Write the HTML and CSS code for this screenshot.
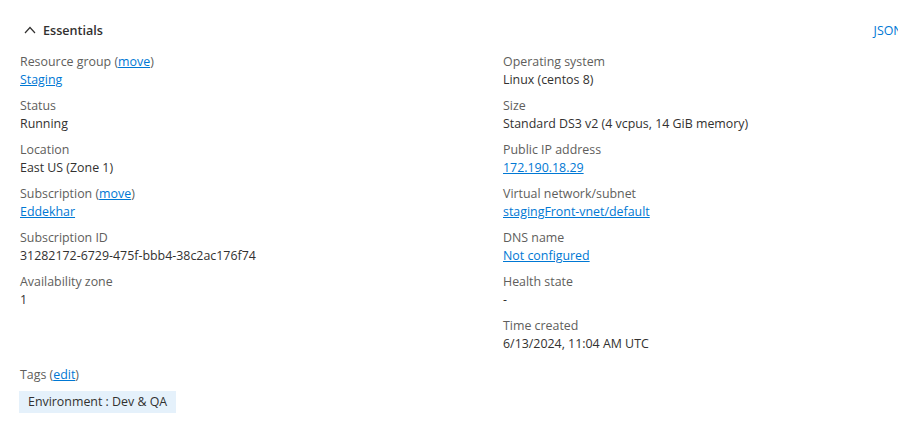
FILE: index.html
```html
<!DOCTYPE html>
<html>
<head>
<meta charset="utf-8">
<link rel="stylesheet" href="styles.css">
</head>
<body>
<div class="page">
  <div class="header">
    <button class="toggle">
      <svg class="chev" width="12" height="8" viewBox="0 0 12 8"><path d="M1 7 L6 1.5 L11 7" fill="none" stroke="#323130" stroke-width="1.2"/></svg>
      <span class="title">Essentials</span>
    </button>
    <a class="link json" href="#">JSON View</a>
  </div>
  <div class="grid">
    <div class="col">
      <div class="item"><div class="label">Resource group (<a class="link" href="#">move</a>)</div><div class="value"><a class="link" href="#">Staging</a></div></div>
      <div class="item"><div class="label">Status</div><div class="value">Running</div></div>
      <div class="item"><div class="label">Location</div><div class="value">East US (Zone 1)</div></div>
      <div class="item"><div class="label">Subscription (<a class="link" href="#">move</a>)</div><div class="value"><a class="link" href="#">Eddekhar</a></div></div>
      <div class="item"><div class="label">Subscription ID</div><div class="value">31282172-6729-475f-bbb4-38c2ac176f74</div></div>
      <div class="item"><div class="label">Availability zone</div><div class="value">1</div></div>
    </div>
    <div class="col">
      <div class="item"><div class="label">Operating system</div><div class="value">Linux (centos 8)</div></div>
      <div class="item"><div class="label">Size</div><div class="value">Standard DS3 v2 (4 vcpus, 14 GiB memory)</div></div>
      <div class="item"><div class="label">Public IP address</div><div class="value"><a class="link" href="#">172.190.18.29</a></div></div>
      <div class="item"><div class="label">Virtual network/subnet</div><div class="value"><a class="link" href="#">stagingFront-vnet/default</a></div></div>
      <div class="item"><div class="label">DNS name</div><div class="value"><a class="link" href="#">Not configured</a></div></div>
      <div class="item"><div class="label">Health state</div><div class="value">-</div></div>
      <div class="item"><div class="label">Time created</div><div class="value">6/13/2024, 11:04 AM UTC</div></div>
    </div>
  </div>
  <div class="tags">
    <div class="label">Tags (<a class="link" href="#">edit</a>)</div>
    <div class="tag">Environment : Dev &amp; QA</div>
  </div>
</div>
</body>
</html>
```

FILE: styles.css
```css
html, body {
  margin: 0;
  padding: 0;
  background: #ffffff;
  overflow: hidden;
}
body {
  font-family: "Open Sans", "Noto Sans", sans-serif;
  font-size: 12.4px;
  color: #323130;
}
.page {
  width: 898px;
  padding: 19px 0 0 20px;
  box-sizing: border-box;
}
.header {
  display: flex;
  align-items: center;
  justify-content: space-between;
  height: 22px;
  white-space: nowrap;
  margin-right: -35px;
}
.toggle {
  display: flex;
  align-items: center;
  gap: 7px;
  border: 0;
  background: none;
  padding: 0 0 0 4px;
  font: inherit;
  font-size: 12.6px;
  color: #323130;
}
.title {
  font-weight: 600;
}
.link {
  color: #0078d4;
  text-decoration: underline;
}
.json {
  text-decoration: none;
}
.grid {
  display: grid;
  grid-template-columns: 483px 1fr;
  margin-top: 12px;
}
.item {
  height: 44px;
}
.label {
  color: #605e5c;
  line-height: 18px;
}
.value {
  line-height: 18px;
}
.tags {
  margin-top: 5px;
}
.tag {
  display: inline-block;
  margin-top: 7px;
  margin-left: -1px;
  background: #e5f1fb;
  padding: 0 9px;
  height: 22px;
  line-height: 22px;
}
```
